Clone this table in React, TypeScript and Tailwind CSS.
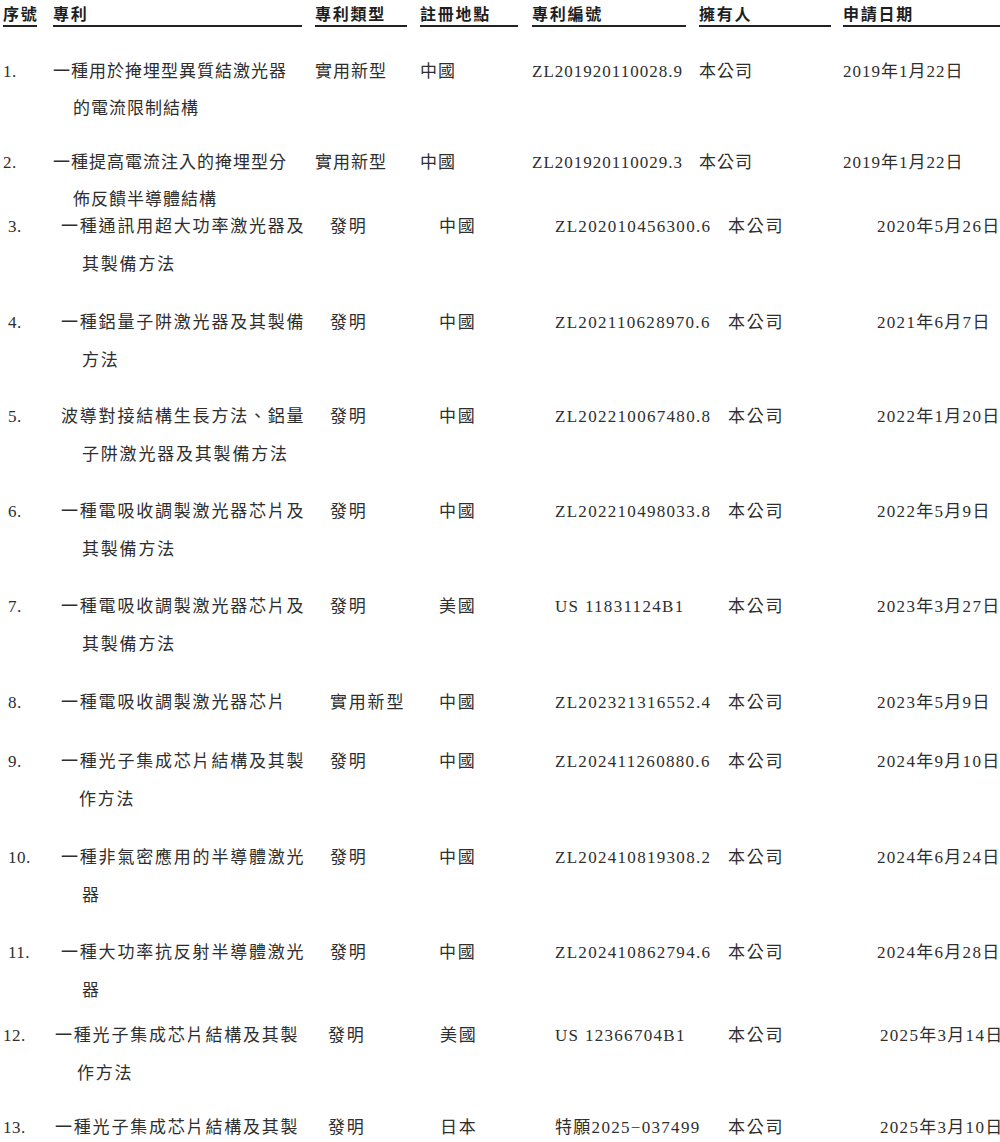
import React from "react";

type Row = {
  n: string;
  l1: string;
  l2?: string;
  type: string;
  country: string;
  num: string;
  owner: string;
  date: string;
  wrap: string;
  ind: string;
  track: string;
  numTrack: string;
};

const A = "grid grid-cols-[50px_262px_105px_112px_167px_144px_1fr] pl-[3px] leading-[37px]";
const B = "grid grid-cols-[53px_269px_109px_116px_173px_149px_1fr] pl-[8px] leading-[38px]";
const C = "grid grid-cols-[52px_273px_112px_115px_173px_152px_1fr] pl-[3px] leading-[38px]";

const rows: Row[] = [
  { n: "1.", l1: "一種用於掩埋型異質結激光器", l2: "的電流限制結構", type: "實用新型", country: "中國", num: "ZL201920110028.9", owner: "本公司", date: "2019年1月22日", wrap: `${A} mt-[26px]`, ind: "pl-[20px]", track: "tracking-[1px]", numTrack: "tracking-[1px]" },
  { n: "2.", l1: "一種提高電流注入的掩埋型分", l2: "佈反饋半導體結構", type: "實用新型", country: "中國", num: "ZL201920110029.3", owner: "本公司", date: "2019年1月22日", wrap: `${A} mt-[17px]`, ind: "pl-[20px]", track: "tracking-[1px]", numTrack: "tracking-[1px]" },
  { n: "3.", l1: "一種通訊用超大功率激光器及", l2: "其製備方法", type: "發明", country: "中國", num: "ZL202010456300.6", owner: "本公司", date: "2020年5月26日", wrap: `${B} -mt-[10px]`, ind: "pl-[21px]", track: "tracking-[1.8px]", numTrack: "tracking-[1.3px]" },
  { n: "4.", l1: "一種鋁量子阱激光器及其製備", l2: "方法", type: "發明", country: "中國", num: "ZL202110628970.6", owner: "本公司", date: "2021年6月7日", wrap: `${B} mt-[20px]`, ind: "pl-[21px]", track: "tracking-[1.8px]", numTrack: "tracking-[1.3px]" },
  { n: "5.", l1: "波導對接結構生長方法、鋁量", l2: "子阱激光器及其製備方法", type: "發明", country: "中國", num: "ZL202210067480.8", owner: "本公司", date: "2022年1月20日", wrap: `${B} mt-[18px]`, ind: "pl-[21px]", track: "tracking-[1.8px]", numTrack: "tracking-[1.3px]" },
  { n: "6.", l1: "一種電吸收調製激光器芯片及", l2: "其製備方法", type: "發明", country: "中國", num: "ZL202210498033.8", owner: "本公司", date: "2022年5月9日", wrap: `${B} mt-[19px]`, ind: "pl-[21px]", track: "tracking-[1.8px]", numTrack: "tracking-[1.3px]" },
  { n: "7.", l1: "一種電吸收調製激光器芯片及", l2: "其製備方法", type: "發明", country: "美國", num: "US 11831124B1", owner: "本公司", date: "2023年3月27日", wrap: `${B} mt-[19px]`, ind: "pl-[21px]", track: "tracking-[1.8px]", numTrack: "tracking-[1.3px]" },
  { n: "8.", l1: "一種電吸收調製激光器芯片", type: "實用新型", country: "中國", num: "ZL202321316552.4", owner: "本公司", date: "2023年5月9日", wrap: `${B} mt-[20px]`, ind: "pl-[21px]", track: "tracking-[1.8px]", numTrack: "tracking-[1.3px]" },
  { n: "9.", l1: "一種光子集成芯片結構及其製", l2: "作方法", type: "發明", country: "中國", num: "ZL202411260880.6", owner: "本公司", date: "2024年9月10日", wrap: `${B} mt-[21px]`, ind: "pl-[18px]", track: "tracking-[1.8px]", numTrack: "tracking-[1.3px]" },
  { n: "10.", l1: "一種非氣密應用的半導體激光", l2: "器", type: "發明", country: "中國", num: "ZL202410819308.2", owner: "本公司", date: "2024年6月24日", wrap: `${B} mt-[20px]`, ind: "pl-[21px]", track: "tracking-[1.8px]", numTrack: "tracking-[1.3px]" },
  { n: "11.", l1: "一種大功率抗反射半導體激光", l2: "器", type: "發明", country: "中國", num: "ZL202410862794.6", owner: "本公司", date: "2024年6月28日", wrap: `${B} mt-[19px]`, ind: "pl-[21px]", track: "tracking-[1.8px]", numTrack: "tracking-[1.3px]" },
  { n: "12.", l1: "一種光子集成芯片結構及其製", l2: "作方法", type: "發明", country: "美國", num: "US 12366704B1", owner: "本公司", date: "2025年3月14日", wrap: `${C} mt-[7px]`, ind: "pl-[22px]", track: "tracking-[1.8px]", numTrack: "tracking-[1.3px]" },
  { n: "13.", l1: "一種光子集成芯片結構及其製", type: "發明", country: "日本", num: "特願2025−037499", owner: "本公司", date: "2025年3月10日", wrap: `${C} mt-[16px]`, ind: "pl-[22px]", track: "tracking-[1.8px]", numTrack: "tracking-[1.3px]" },
];

const heads: { t: string; w: string }[] = [
  { t: "序號", w: "w-[34px]" },
  { t: "專利", w: "w-[249px]" },
  { t: "專利類型", w: "w-[92px]" },
  { t: "註冊地點", w: "w-[98px]" },
  { t: "專利編號", w: "w-[154px]" },
  { t: "擁有人", w: "w-[132px]" },
  { t: "申請日期", w: "w-[157px]" },
];

export default function App() {
  return (
    <div className="h-[1142px] w-[1000px] overflow-hidden bg-white text-[17px] text-[#2e2e2e] font-['Liberation_Serif','Noto_Sans_CJK_TC',serif]">
      <div className="grid grid-cols-[50px_262px_105px_112px_167px_144px_1fr] pl-[3px]">
        {heads.map((h) => (
          <div key={h.t} className={`${h.w} border-b-2 border-[#222] pt-[4px] pb-[0px] text-[16px] leading-[21px] tracking-[1.75px] font-bold text-[#1e1e1e] whitespace-nowrap`}>
            {h.t}
          </div>
        ))}
      </div>
      {rows.map((r) => (
        <div key={r.n} className={`${r.wrap} whitespace-nowrap`}>
          <div className="tracking-[0.5px]">{r.n}</div>
          <div className={r.track}>
            <div>{r.l1}</div>
            {r.l2 && <div className={r.ind}>{r.l2}</div>}
          </div>
          <div className={r.track}>{r.type}</div>
          <div className={r.track}>{r.country}</div>
          <div className={r.numTrack}>{r.num}</div>
          <div className={r.track}>{r.owner}</div>
          <div className={r.numTrack}>{r.date}</div>
        </div>
      ))}
    </div>
  );
}
